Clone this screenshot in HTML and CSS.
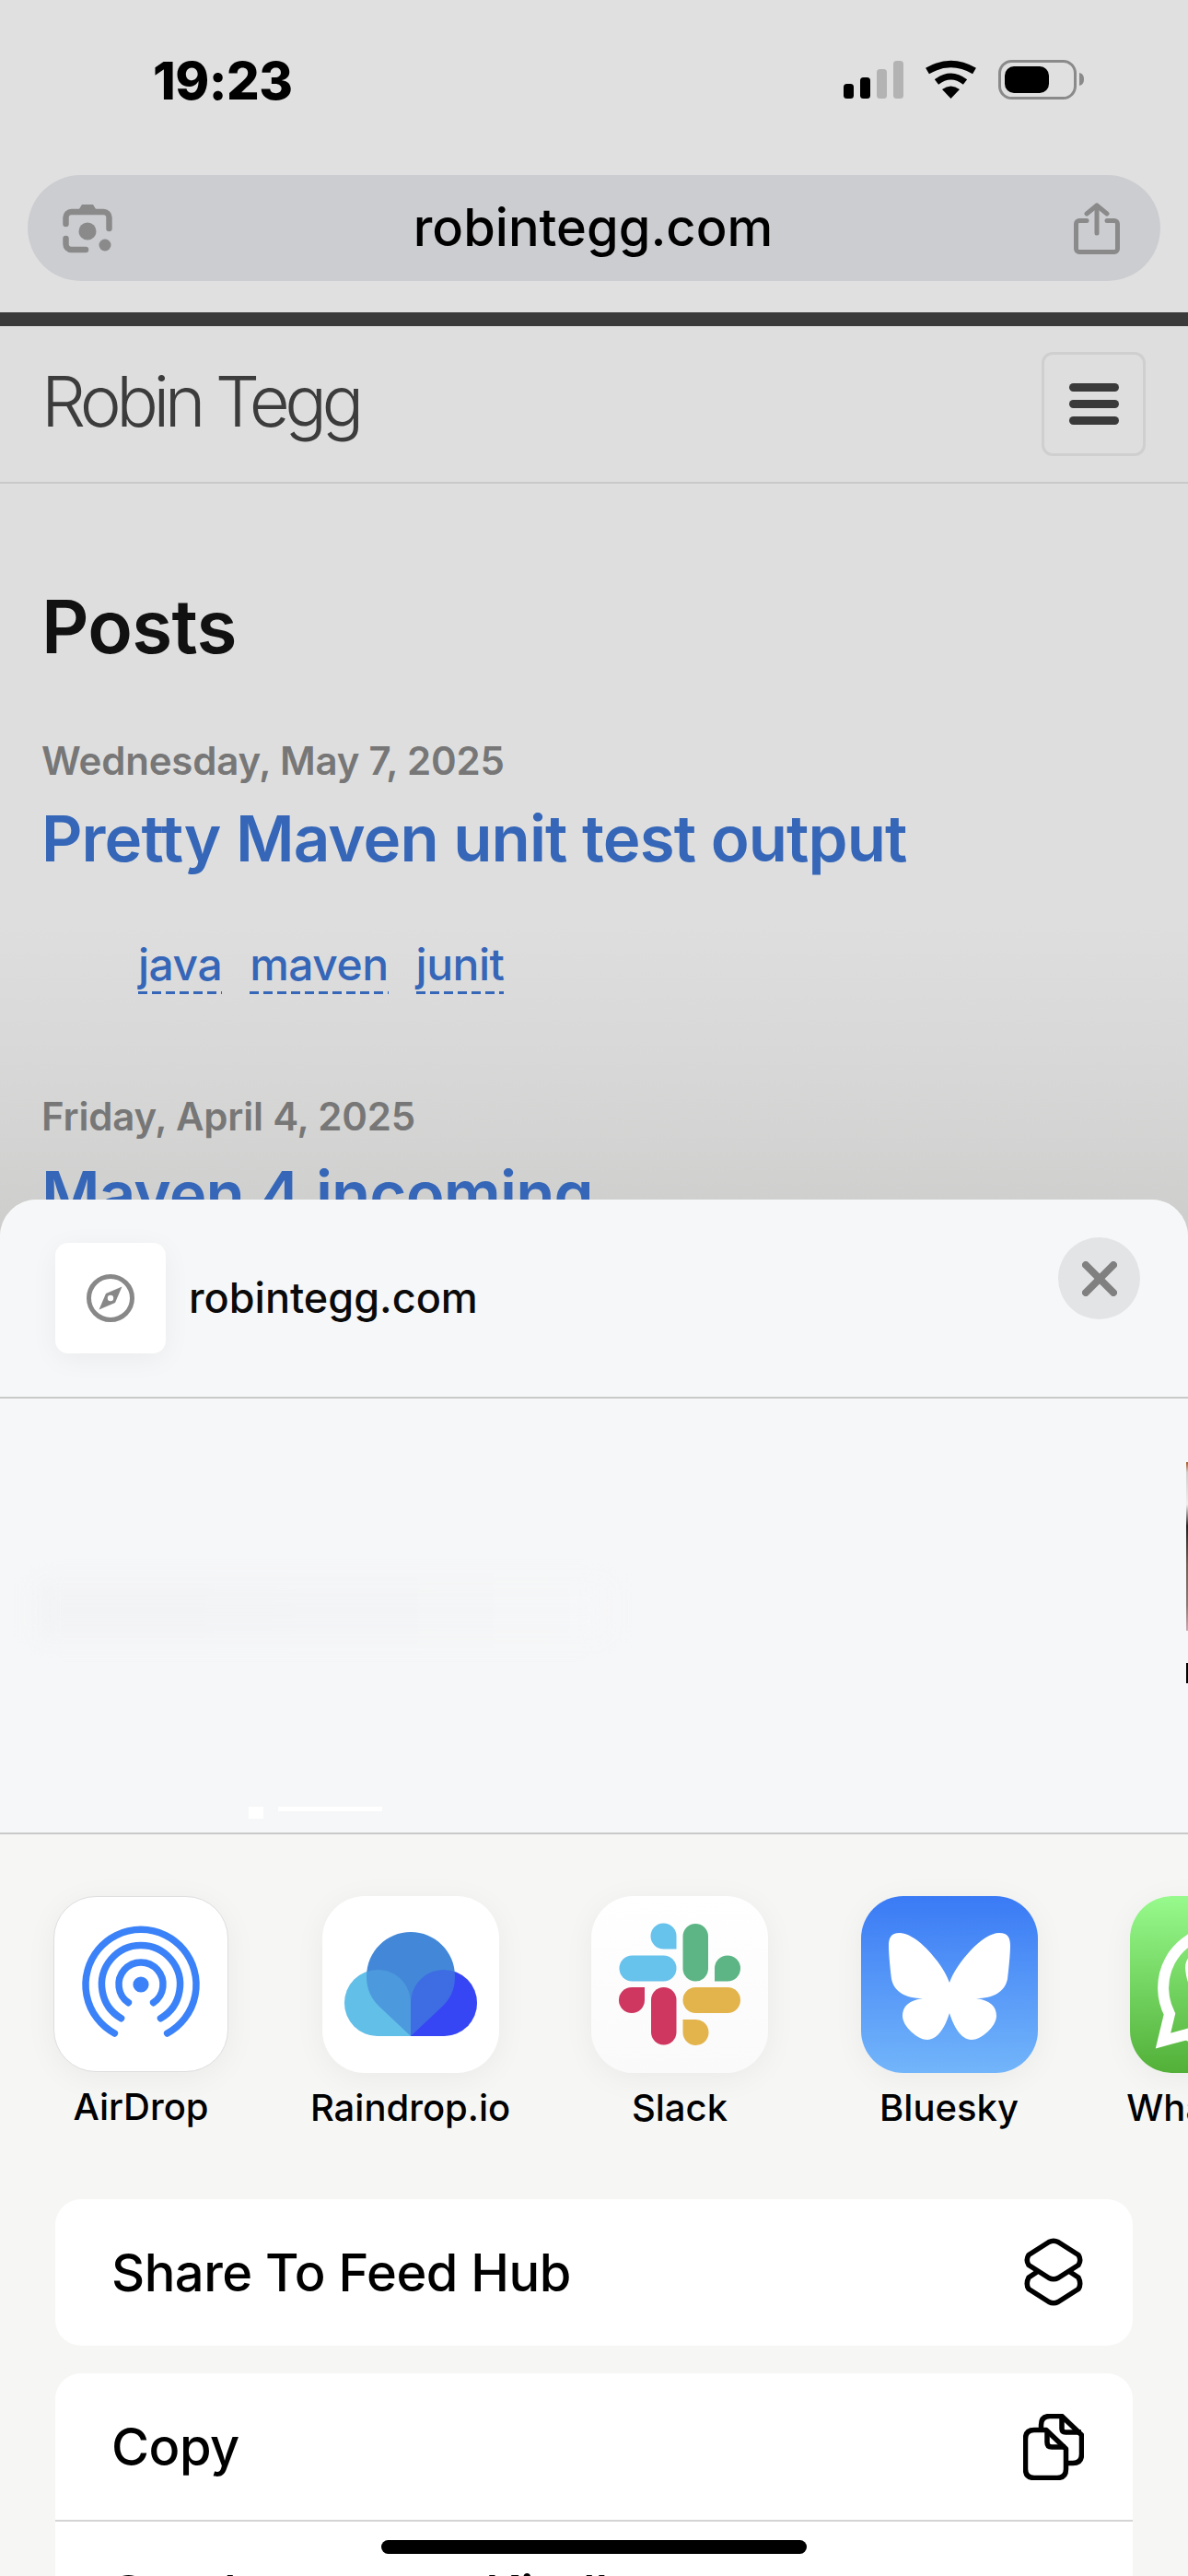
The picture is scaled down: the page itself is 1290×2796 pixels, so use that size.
FILE: index.html
```html
<!DOCTYPE html>
<html lang="en">
<head>
    <meta charset="UTF-8">
    <title>robintegg.com</title>
    <link rel="stylesheet" href="styles.css">
</head>
<body>
<div class="page">
    <div class="browser">
        <div class="status">
            <span class="time">19:23</span>
            <div class="status-icons">
                <svg class="signal" width="65" height="42" viewBox="0 0 65 42">
                    <rect x="0" y="25" width="11" height="16" rx="3.5"/>
                    <rect x="18" y="18" width="11" height="23" rx="3.5"/>
                    <rect x="36" y="9" width="11" height="32" rx="3.5" fill="#b3b3b3"/>
                    <rect x="54" y="0" width="11" height="41" rx="3.5" fill="#b3b3b3"/>
                </svg>
                <svg class="wifi" width="57" height="42" viewBox="0 0 57 42">
                    <path d="M3 12 Q28.5 -3 54 12" fill="none" stroke="#000" stroke-width="7.5"/>
                    <path d="M13 24 Q28.5 12 44 24" fill="none" stroke="#000" stroke-width="7"/>
                    <path d="M28.5 42 L19 32 Q28.5 25 38 32 Z"/>
                </svg>
                <svg class="battery" width="93" height="43" viewBox="0 0 93 43">
                    <rect x="1.5" y="1.5" width="82" height="40" rx="13" fill="none" stroke="#8a8a8a" stroke-width="3"/>
                    <rect x="7" y="7" width="48" height="29" rx="10"/>
                    <path d="M88 14 C92 15 93 18 93 21 C93 24 92 27 88 28 Z" fill="#8a8a8a"/>
                </svg>
            </div>
        </div>
        <div class="urlbar">
            <svg width="54" height="55" viewBox="0 0 54 55" fill="none" stroke="#8a8a8a" stroke-width="6.5" stroke-linecap="round">
                <path d="M3.5 23 V16 a6 6 0 0 1 6 -6 H44.5 a6 6 0 0 1 6 6 V28"/>
                <path d="M3.5 39 V45 a6 6 0 0 0 6 6 H25"/>
                <path d="M16 10 L21 2 H33 L38 10 Z" fill="#8a8a8a" stroke="none"/>
                <circle cx="27" cy="31" r="9.5" fill="#8a8a8a" stroke="none"/>
                <circle cx="46" cy="46" r="6.5" fill="#8a8a8a" stroke="none"/>
            </svg>
            <span class="url">robintegg.com</span>
            <svg width="50" height="56" viewBox="0 0 50 56" fill="none" stroke="#8a8a8a" stroke-width="5" stroke-linecap="round" stroke-linejoin="round">
                <path d="M14 19.5 H6 a3.5 3.5 0 0 0 -3.5 3.5 V50 a3.5 3.5 0 0 0 3.5 3.5 H44 a3.5 3.5 0 0 0 3.5 -3.5 V23 a3.5 3.5 0 0 0 -3.5 -3.5 H36"/>
                <path d="M25 3 V33"/>
                <path d="M14 12 L25 3 L36 12"/>
            </svg>
        </div>
    </div>

    <div class="site-bar"></div>

    <header class="site-header">
        <span class="brand">Robin Tegg</span>
        <div class="menu-btn">
            <span></span>
            <span></span>
            <span></span>
        </div>
    </header>

    <main class="posts">
        <h1>Posts</h1>
        <article class="post">
            <div class="post-date">Wednesday, May 7, 2025</div>
            <h2 class="post-title">Pretty Maven unit test output</h2>
            <ul class="tags">
                <li>java</li>
                <li>maven</li>
                <li>junit</li>
            </ul>
        </article>
        <article class="post">
            <div class="post-date">Friday, April 4, 2025</div>
            <h2 class="post-title">Maven 4 incoming</h2>
        </article>
    </main>
</div>

<section class="sheet">
    <div class="sheet-head">
        <div class="site-icon">
            <svg width="52" height="52" viewBox="0 0 52 52">
                <circle cx="26" cy="26" r="23.5" fill="none" stroke="#888" stroke-width="5"/>
                <path d="M38.5 13.5 L31 31 L13.5 38.5 L21 21 Z" fill="#888"/>
                <circle cx="26" cy="26" r="3.2" fill="#fff"/>
            </svg>
        </div>
        <span class="site-name">robintegg.com</span>
        <div class="close-btn">
            <svg width="38" height="38" viewBox="0 0 38 38" fill="none" stroke="#808080" stroke-width="8" stroke-linecap="round">
                <path d="M4 4 L34 34"/>
                <path d="M34 4 L4 34"/>
            </svg>
        </div>
    </div>

    <div class="preview">
        <div class="preview-ghost"></div>
        <div class="pager">
            <span class="pager-dot"></span>
            <span class="pager-line"></span>
        </div>
        <div class="next-thumb"></div>
        <div class="next-thumb-low"></div>
    </div>

    <div class="apps">
        <div class="app">
            <div class="app-icon airdrop">
                <svg width="190" height="191" viewBox="0 0 190 191" fill="none" stroke="#3b82f9" stroke-width="7.5" stroke-linecap="round">
                    <path d="M66.4 149 A60 60 0 1 1 123.6 149"/>
                    <path d="M73.6 132.7 A42.5 42.5 0 1 1 116.4 132.7"/>
                    <path d="M81.4 115.7 A24 24 0 1 1 108.6 115.7"/>
                    <ellipse cx="95" cy="96" rx="8.6" ry="8.6" fill="#3b82f9" stroke="none"/>
                </svg>
            </div>
            <span class="app-name">AirDrop</span>
        </div>
        <div class="app">
            <div class="app-icon">
                <svg width="192" height="192" viewBox="0 0 192 192">
                    <path d="M96 152 H60 a36 36 0 0 1 0 -72 C80 80 96 96 96 116 Z" fill="#62bfe8"/>
                    <path d="M96 152 H132 a36 36 0 0 0 0 -72 C112 80 96 96 96 116 Z" fill="#3846f4"/>
                    <path d="M96 39 C122 39 144 60 144 87 C144 103 138 112 130 120 L96 152 L62 120 C54 112 48 103 48 87 C48 60 70 39 96 39 Z" fill="#4388d8"/>
                    <path d="M96 152 H60 a36 36 0 0 1 0 -72 C80 80 96 96 96 116 Z" fill="#62bfe8" opacity=".3"/>
                    <path d="M96 152 H132 a36 36 0 0 0 0 -72 C112 80 96 96 96 116 Z" fill="#3846f4" opacity=".4"/>
                </svg>
            </div>
            <span class="app-name">Raindrop.io</span>
        </div>
        <div class="app">
            <div class="app-icon slack">
                <svg width="192" height="192" viewBox="0 0 192 192">
                    <rect x="30.5" y="64.5" width="62" height="28" rx="14" fill="#67c2ec"/>
                    <path d="M92.5 57.5 H79 a14 14 0 1 1 13.5 -14 Z" fill="#67c2ec"/>
                    <rect x="99.5" y="30" width="27.5" height="62.5" rx="13.7" fill="#5db585"/>
                    <path d="M134 92.5 V78.5 a14 14 0 1 1 14 14 Z" fill="#5db585"/>
                    <rect x="65" y="99" width="27.5" height="62.5" rx="13.7" fill="#cf3660"/>
                    <path d="M58 99 V113 a14 14 0 1 1 -14 -14 Z" fill="#cf3660"/>
                    <rect x="99.5" y="99" width="62.5" height="28" rx="14" fill="#e3b44c"/>
                    <path d="M99.5 134 H113 a14 14 0 1 1 -13.5 14 Z" fill="#e3b44c"/>
                </svg>
            </div>
            <span class="app-name">Slack</span>
        </div>
        <div class="app">
            <div class="app-icon bluesky">
                <svg width="192" height="192" viewBox="0 0 192 192">
                    <path d="M96 94 C88 72 60 40 42 40 C32 40 30 46 30 54 C30 64 32 82 33 90 C36 104 48 111 67 111 C52 113 45 120 45 130 C45 142 62 156 72 156 C84 156 92 140 96 127 C100 140 108 156 120 156 C130 156 147 142 147 130 C147 120 140 113 125 111 C144 111 156 104 159 90 C160 82 162 64 162 54 C162 46 160 40 150 40 C132 40 104 72 96 94 Z" fill="#fff"/>
                </svg>
            </div>
            <span class="app-name">Bluesky</span>
        </div>
        <div class="app">
            <div class="app-icon whatsapp">
                <svg width="192" height="192" viewBox="0 0 192 192">
                    <path d="M62 150 L36 157 L43 128 A62 62 0 1 1 62 150 Z" fill="none" stroke="#fff" stroke-width="12"/>
                    <path d="M60 78 C60 68 66 62 74 62 L84 86 L76 96 C80 106 88 114 98 120 L108 110 L132 122 C130 134 118 140 106 136 C84 130 62 108 60 78 Z" fill="#fff"/>
                </svg>
            </div>
            <span class="app-name">WhatsApp</span>
        </div>
    </div>

    <div class="actions">
        <div class="action-group">
            <div class="action">
                <span>Share To Feed Hub</span>
                <svg width="66" height="75" viewBox="0 0 66 75" fill="none" stroke="#000" stroke-width="5.5" stroke-linejoin="round">
                    <path d="M28 4.5 Q33 2 38 4.5 L60 18.5 Q63.5 24 60 29.5 L38 43.5 Q33 46 28 43.5 L6 29.5 Q2.5 24 6 18.5 Z"/>
                    <path d="M15 37 L6 43 Q2.5 50 6 55.5 L28 69.5 Q33 72 38 69.5 L60 55.5 Q63.5 50 60 43 L51 37"/>
                </svg>
            </div>
        </div>
        <div class="action-group">
            <div class="action">
                <span>Copy</span>
                <svg width="66" height="72" viewBox="0 0 66 72" fill="none" stroke="#000" stroke-width="5.5" stroke-linejoin="round">
                    <path d="M2.5 27 Q2.5 17.5 12 17.5 H25 L46.5 38 V60 Q46.5 69.5 37 69.5 H12 Q2.5 69.5 2.5 60 Z"/>
                    <path d="M26 18 V31 Q26 36 31 36 H46"/>
                    <path d="M19.5 17 V12 Q19.5 2.5 29 2.5 H42 L63.5 23 V44 Q63.5 53.5 54 53.5 H47"/>
                    <path d="M42 3 V16 Q42 20 46 20 H63"/>
                </svg>
            </div>
            <div class="action">
                <span>Send a copy to Kindle</span>
                <svg class="icon-cut" width="66" height="72" viewBox="0 0 66 72" fill="none" stroke="#000" stroke-width="5.5">
                    <rect x="7.5" y="2.5" width="51" height="60" rx="8"/>
                </svg>
            </div>
        </div>
    </div>
</section>

<div class="home-bar"></div>
</body>
</html>
```

FILE: styles.css
```css
* {
    box-sizing: border-box;
}

html, body {
    margin: 0;
    padding: 0;
}

body {
    position: relative;
    width: 1290px;
    height: 2796px;
    overflow: hidden;
    background: #f6f6f5;
    font-family: Inter, "Noto Sans", sans-serif;
    color: #000;
}

svg {
    display: block;
    flex-shrink: 0;
}

.page {
    height: 1342px;
    overflow: hidden;
    background: #dedede;
}

/* browser chrome */
.browser {
    height: 339px;
    padding: 0 30px;
    background: #e0e0e0;
}

.status {
    display: flex;
    align-items: flex-start;
    justify-content: space-between;
    height: 190px;
    padding: 0 83px 0 136px;
}

.time {
    margin-top: 54px;
    font-size: 56px;
    line-height: 68px;
    font-weight: 800;
    letter-spacing: -0.5px;
}

.status-icons {
    display: flex;
    align-items: flex-start;
    margin-top: 65px;
}

.signal {
    margin: 1px 23px 0 0;
}

.wifi {
    margin-right: 23px;
}

.urlbar {
    display: flex;
    align-items: center;
    justify-content: space-between;
    height: 115px;
    padding: 0 44px 0 38px;
    border-radius: 58px;
    background: #cccdd1;
}

.url {
    padding-bottom: 2px;
    font-size: 56px;
    font-weight: 500;
}

.site-bar {
    height: 15px;
    background: #3a3a3a;
}

.site-header {
    display: flex;
    align-items: center;
    justify-content: space-between;
    height: 171px;
    padding: 0 46px 0 45px;
    border-bottom: 2px solid #c9c9c9;
}

.brand {
    padding-bottom: 8px;
    font-size: 76px;
    font-weight: 300;
    letter-spacing: -5.5px;
    color: #3c3c3c;
}

.menu-btn {
    display: flex;
    flex-direction: column;
    align-items: center;
    justify-content: center;
    gap: 9px;
    width: 113px;
    height: 113px;
    border: 3px solid #cfcfcf;
    border-radius: 12px;
}

.menu-btn span {
    width: 54px;
    height: 9px;
    border-radius: 5px;
    background: #3a3a3a;
}

/* page behind the sheet */
.posts {
    height: 818px;
    padding: 0 45px;
    background: linear-gradient(#dedede, #dedede 58%, #d8d8d8 76%, #cdcecc);
}

.posts h1 {
    margin: 0;
    padding-top: 108px;
    font-size: 80px;
    line-height: 94px;
    font-weight: 600;
    letter-spacing: -0.7px;
    color: #111;
}

.post-date {
    font-size: 42px;
    line-height: 50px;
    font-weight: 600;
    letter-spacing: -0.2px;
    color: #777;
}

.post:first-of-type .post-date {
    margin-top: 74px;
}

.post-title {
    margin: 17px 0 0;
    font-size: 69px;
    line-height: 84px;
    font-weight: 600;
    letter-spacing: -0.9px;
    color: #3566b8;
}

.tags {
    display: flex;
    gap: 30px;
    margin: 66px 0 108px;
    padding: 0 0 0 105px;
    list-style: none;
    font-size: 48px;
    line-height: 58px;
    font-weight: 500;
    letter-spacing: -0.5px;
    color: #3566b8;
}

.tags li {
    padding-bottom: 3px;
    background: repeating-linear-gradient(90deg, #3566b8 0 10px, transparent 10px 15px) left bottom / 100% 3px no-repeat;
}

/* share sheet */
.sheet {
    position: relative;
    height: 1494px;
    margin-top: -40px;
    overflow: hidden;
    border-radius: 40px 40px 0 0;
    background: #f6f6f5;
}

.sheet-head {
    position: relative;
    display: flex;
    align-items: flex-start;
    height: 216px;
    padding: 47px 0 0 60px;
    background: #f6f7f8;
    border-bottom: 2px solid #c9c9c9;
}

.site-icon {
    display: flex;
    align-items: center;
    justify-content: center;
    width: 120px;
    height: 120px;
    border-radius: 14px;
    background: #fff;
    box-shadow: 0 6px 30px rgba(0, 0, 0, 0.05);
}

.site-name {
    margin-left: 25px;
    font-size: 45px;
    line-height: 120px;
    font-weight: 500;
    color: #0a0a0a;
}

.close-btn {
    position: absolute;
    top: 41px;
    right: 52px;
    display: flex;
    align-items: center;
    justify-content: center;
    width: 89px;
    height: 89px;
    border-radius: 50%;
    background: #e3e4e5;
}

.preview {
    position: relative;
    height: 473px;
    padding-top: 200px;
    background: #f6f7f8;
    border-bottom: 2px solid #c9c9c9;
}

.preview-ghost {
    width: 620px;
    height: 60px;
    margin-left: 40px;
    background: linear-gradient(90deg, #f2f3f5, #f3f4f6 60%, #f6f7f8);
    filter: blur(12px);
}

.pager {
    display: flex;
    align-items: flex-start;
    gap: 16px;
    margin: 183px 0 0 270px;
}

.pager-dot {
    width: 16px;
    height: 13px;
    background: #fff;
}

.pager-line {
    width: 113px;
    height: 5px;
    background: #fff;
}

.next-thumb {
    position: absolute;
    top: 69px;
    right: 0;
    width: 2px;
    height: 183px;
    background: linear-gradient(#a8551b, #cfcfd0 6%, #eee 25%, #222 38%, #6e5e55 60%, #8b7a74 85%, #cbaab4);
}

.next-thumb-low {
    position: absolute;
    top: 287px;
    right: 0;
    width: 2px;
    height: 22px;
    background: #000;
}

.apps {
    display: flex;
    gap: 100.5px;
    height: 396px;
    padding: 67px 0 0 57px;
    overflow: hidden;
}

.app {
    display: flex;
    flex-direction: column;
    align-items: center;
    width: 192px;
    flex-shrink: 0;
}

.app-icon {
    width: 192px;
    height: 192px;
    border-radius: 46px;
    background: #fff;
    box-shadow: 0 6px 34px rgba(0, 0, 0, 0.05);
    overflow: hidden;
}

.airdrop {
    width: 190px;
    height: 191px;
    border: 1px solid #dedede;
}

.airdrop svg {
    margin: -1px;
}

.slack {
    background: linear-gradient(#fff, #fafafa);
}

.bluesky {
    background: linear-gradient(#3a7af5, #72b5fa);
}

.whatsapp {
    background: linear-gradient(#97fa8c, #52b038);
}

.app-name {
    margin-top: 14px;
    font-size: 40px;
    line-height: 48px;
    font-weight: 500;
    white-space: nowrap;
}

.actions {
    display: flex;
    flex-direction: column;
    gap: 30px;
    padding: 0 60px;
}

.action-group {
    border-radius: 28px;
    background: #fff;
}

.action {
    display: flex;
    align-items: center;
    justify-content: space-between;
    height: 159px;
    padding: 0 53px 0 61px;
    font-size: 56px;
    font-weight: 500;
    letter-spacing: -0.5px;
}

.action + .action {
    border-top: 2px solid #d4d4d4;
}

.icon-cut {
    margin-top: 50px;
}

.home-bar {
    position: absolute;
    left: 414px;
    top: 2757px;
    width: 462px;
    height: 15px;
    border-radius: 8px;
    background: #000;
}
```
